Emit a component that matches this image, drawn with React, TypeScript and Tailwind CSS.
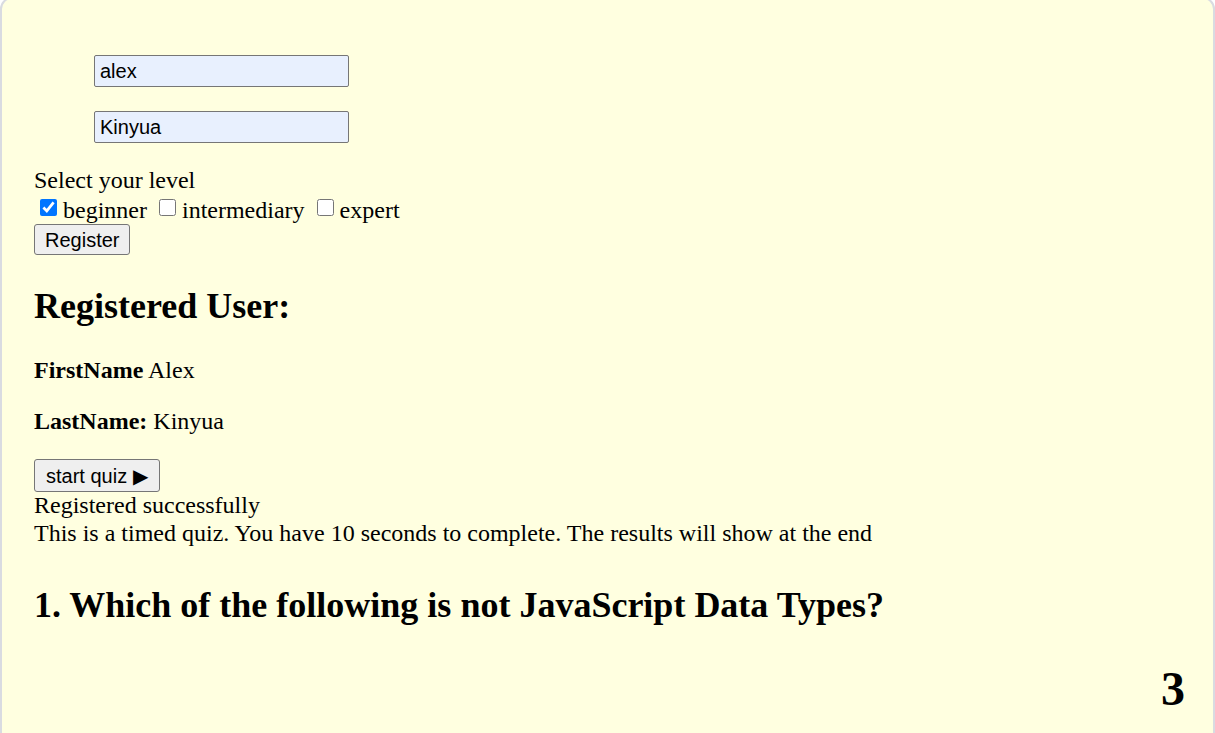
import React from "react";

const serif = "font-['Liberation_Serif','Times_New_Roman',serif]";
const sans = "font-['Liberation_Sans',Arial,sans-serif]";

const LEVELS = [
  { id: "beginner", label: "beginner", checked: true },
  { id: "intermediary", label: "intermediary", checked: false },
  { id: "expert", label: "expert", checked: false },
];

function TextInput({ value }: { value: string }) {
  return (
    <input
      type="text"
      defaultValue={value}
      className={`${sans} block h-[32px] w-[255px] rounded-[2px] border border-[#767676] bg-[#e8f0fe] px-[5px] text-[20px] leading-none text-black outline-none`}
    />
  );
}

function Button({ children, className = "" }: { children: React.ReactNode; className?: string }) {
  return (
    <button
      type="button"
      className={`${sans} block rounded-[3px] border border-[#767676] bg-[#efefef] text-[20px] leading-none text-black ${className}`}
    >
      {children}
    </button>
  );
}

export default function App() {
  return (
    <div className="h-[733px] w-full overflow-hidden bg-white">
      <div
        className={`${serif} -mt-[3px] min-h-[760px] rounded-[12px] border-2 border-[#d9dbe1] bg-[#ffffe0] pl-[32px] pr-[28px] text-[24px] leading-[1.15] text-black`}
      >
        <div className="pl-[60px] pt-[56px]">
          <TextInput value="alex" />
          <div className="mt-[24px]">
            <TextInput value="Kinyua" />
          </div>
        </div>

        <div className="mt-[24px] h-[29px]">Select your level</div>
        <div className="flex h-[28px] items-start">
          {LEVELS.map((lvl) => (
            <label key={lvl.id} className="mr-[6px] flex items-start">
              <input
                type="checkbox"
                defaultChecked={lvl.checked}
                className="ml-[6px] mr-[6px] mt-[3px] h-[17px] w-[17px] accent-[#0075ff]"
              />
              <span className="mt-[1px]">{lvl.label}</span>
            </label>
          ))}
        </div>
        <Button className="h-[31px] px-[10px]">Register</Button>

        <h2 className="mt-[31px] text-[36px] font-bold leading-[41px]">Registered User:</h2>

        <p className="mt-[30px]">
          <b>FirstName</b> Alex
        </p>
        <p className="mt-[23px]">
          <b>LastName:</b> Kinyua
        </p>

        <Button className="mt-[24px] h-[33px] px-[11px]">start quiz ▶</Button>
        <div>Registered successfully</div>
        <div>This is a timed quiz. You have 10 seconds to complete. The results will show at the end</div>

        <h2 className="mt-[38px] text-[36px] font-bold leading-[41px]">
          1. Which of the following is not JavaScript Data Types?
        </h2>

        <div className="mt-[35px] text-right text-[48px] font-bold leading-[55px]">3</div>
      </div>
    </div>
  );
}
